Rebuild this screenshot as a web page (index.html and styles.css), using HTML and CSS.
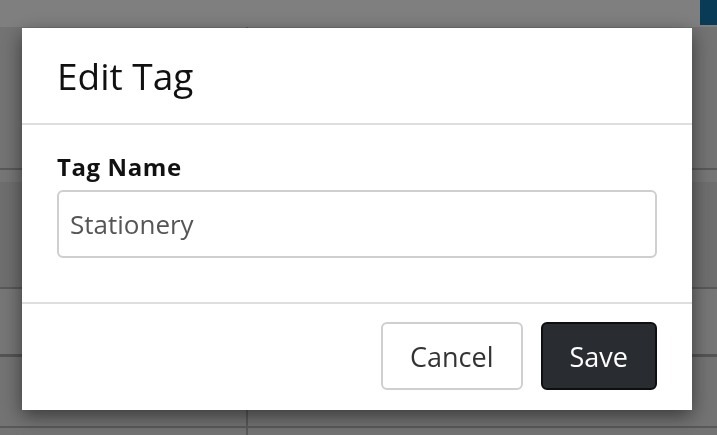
FILE: index.html
```
<!DOCTYPE html>
<html lang="en">
<head>
<meta charset="utf-8">
<title>Edit Tag</title>
<link rel="stylesheet" href="styles.css">
</head>
<body>
<div class="page">
  <header class="topbar"><span class="brand-block"></span></header>
  <div class="table">
    <div class="row row-a"><div class="cell"></div><div class="cell"></div></div>
    <div class="row row-b"><div class="band"></div></div>
    <div class="row row-c"><div class="cell"></div><div class="cell"></div></div>
    <div class="row row-d"><div class="cell"></div><div class="cell"></div></div>
    <div class="row row-e"><div class="cell"></div><div class="cell"></div></div>
  </div>
</div>
<div class="backdrop">
  <div class="modal" role="dialog" aria-labelledby="modal-title">
    <div class="modal-header">
      <h2 class="modal-title" id="modal-title">Edit Tag</h2>
    </div>
    <div class="modal-body">
      <label class="field-label" for="tag-name">Tag Name</label>
      <input class="field-input" id="tag-name" type="text" value="Stationery">
    </div>
    <div class="modal-footer">
      <button class="btn btn-cancel" type="button">Cancel</button>
      <button class="btn btn-save" type="button">Save</button>
    </div>
  </div>
</div>
</body>
</html>
```

FILE: styles.css
```
* { box-sizing: border-box; }

html, body {
  margin: 0;
  height: 100%;
  overflow: hidden;
}

body {
  font-family: "Open Sans", "Noto Sans", sans-serif;
  background: #e6e6e6;
  color: #111;
}

.page {
  height: 100%;
  overflow: hidden;
}

.topbar {
  height: 27px;
  background: #ffffff;
  display: flex;
  justify-content: flex-end;
}

.brand-block {
  width: 17px;
  height: 25px;
  background: #1477ad;
}

.table {
  display: flex;
  flex-direction: column;
}

.row {
  display: grid;
  grid-template-columns: 248px 1fr;
  border-bottom: 2px solid #b2b2b2;
}

.row .cell:first-child {
  border-right: 2px solid #b2b2b2;
}

.row-a { height: 143px; }

.row-b {
  display: block;
  height: 119px;
  padding-top: 12px;
  background: #ececec;
}

.band {
  height: 105px;
  background: #dddddd;
}

.row-c { height: 68px; background: #ececec; border-bottom-width: 3px; border-bottom-color: #a8a8a8; }
.row-d { height: 71px; }
.row-e { height: 7px; border-bottom: 0; }

.backdrop {
  position: fixed;
  inset: 0;
  background: rgba(0, 0, 0, 0.5);
  padding: 28px 0 0 22px;
}

.modal {
  width: 670px;
  background: #ffffff;
  box-shadow: 0 6px 18px rgba(0, 0, 0, 0.5);
}

.modal-header {
  padding: 20px 35px;
  border-bottom: 2px solid #dedede;
}

.modal-title {
  margin: 0;
  font-size: 37px;
  line-height: 55px;
  font-weight: 400;
  color: #111;
}

.modal-body {
  padding: 24px 35px 44px;
  display: flex;
  flex-direction: column;
}

.field-label {
  font-size: 24px;
  line-height: 36px;
  font-weight: 700;
  letter-spacing: 0.6px;
  color: #111;
  margin-bottom: 5px;
}

.field-input {
  height: 68px;
  width: 100%;
  border: 2px solid #cfcfcf;
  border-radius: 6px;
  padding: 0 11px;
  font-family: inherit;
  font-size: 26px;
  color: #555;
  background: #fff;
  outline: none;
}

.modal-footer {
  border-top: 2px solid #dedede;
  padding: 18px 35px 20px;
  display: flex;
  justify-content: flex-end;
  gap: 18px;
}

.btn {
  height: 68px;
  padding: 0 27px;
  font-family: inherit;
  font-size: 27px;
  border-radius: 6px;
  cursor: pointer;
}

.btn-cancel {
  background: #fff;
  border: 2px solid #cfcfcf;
  color: #333;
}

.btn-save {
  background: #292d32;
  border: 2px solid #0e0f10;
  color: #fff;
}
```
